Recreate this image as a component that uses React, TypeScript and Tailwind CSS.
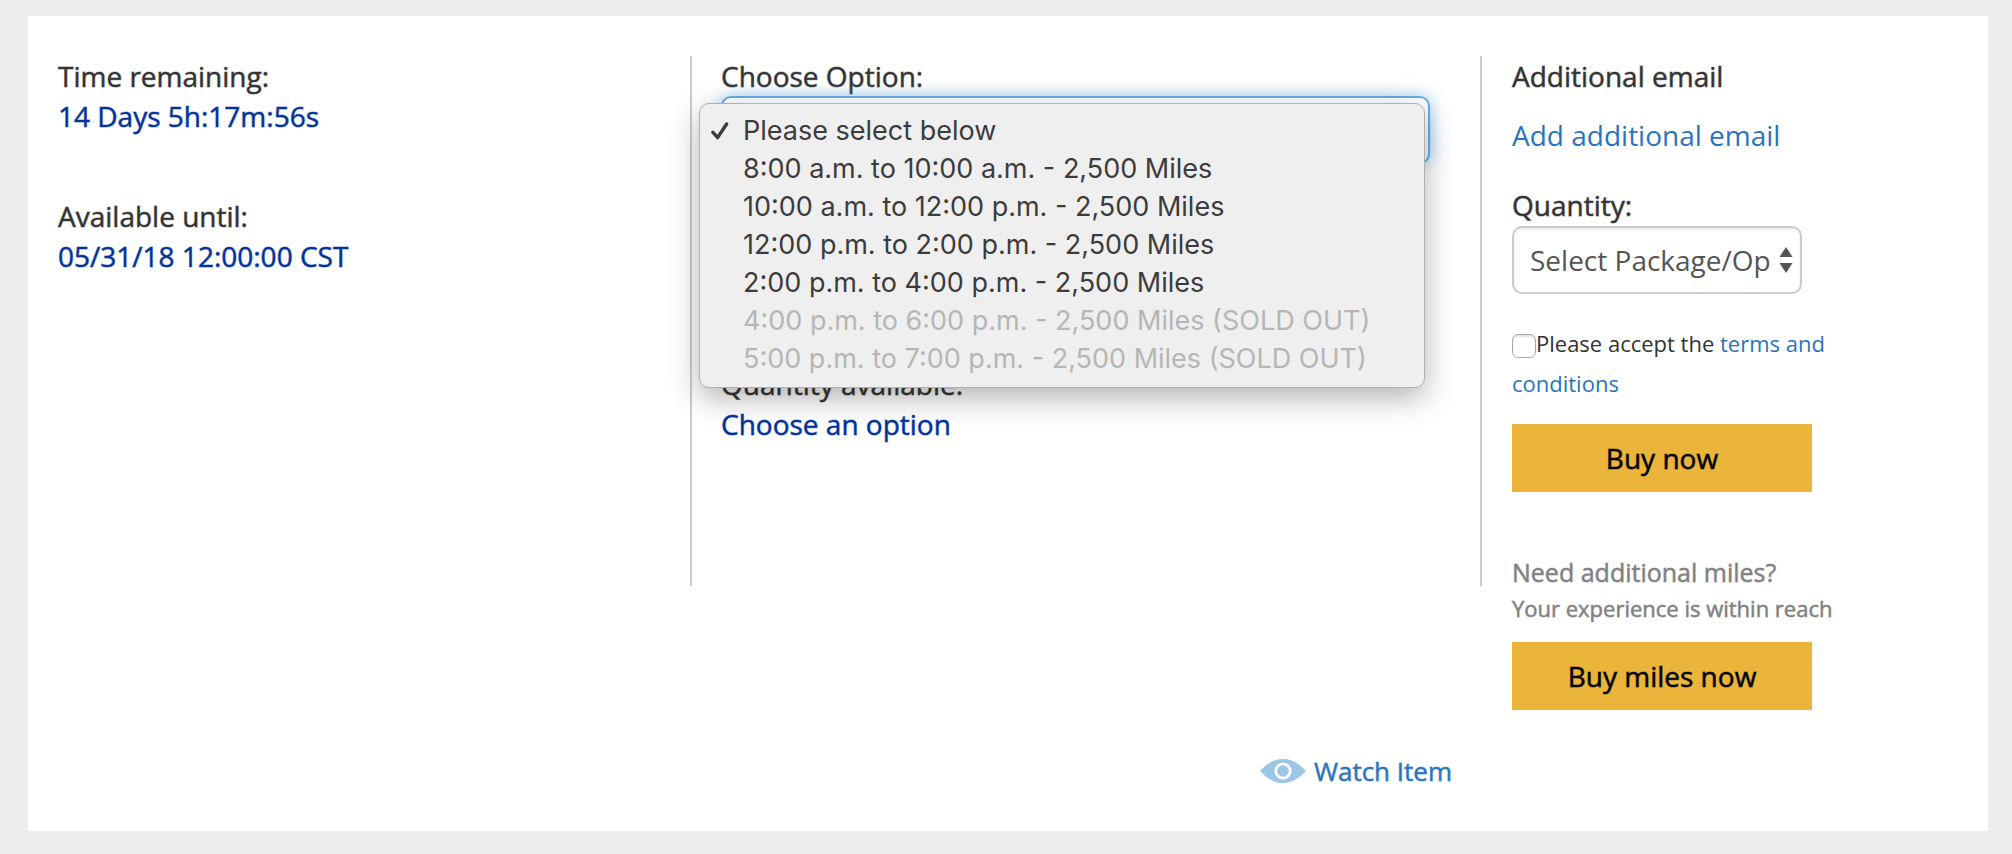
import { ReactNode } from 'react';
import { clsx } from 'clsx';

const options = [
  { label: 'Please select below' },
  { label: '8:00 a.m. to 10:00 a.m. - 2,500 Miles' },
  { label: '10:00 a.m. to 12:00 p.m. - 2,500 Miles' },
  { label: '12:00 p.m. to 2:00 p.m. - 2,500 Miles' },
  { label: '2:00 p.m. to 4:00 p.m. - 2,500 Miles' },
  { label: '4:00 p.m. to 6:00 p.m. - 2,500 Miles (SOLD OUT)', soldOut: true },
  { label: '5:00 p.m. to 7:00 p.m. - 2,500 Miles (SOLD OUT)', soldOut: true },
];

// thickens the regular weight without changing its widths
const strong = '[-webkit-text-stroke:1px_color-mix(in_srgb,currentColor_50%,transparent)]';

const Info = ({ title, value, className }: { title: string; value: string; className?: string }) => (
  <dl className={className}>
    <dt className={strong}>{title}</dt>
    <dd className={clsx('text-[#003399]', strong)}>{value}</dd>
  </dl>
);

const YellowButton = ({ children, className }: { children: ReactNode; className?: string }) => (
  <button
    type="button"
    className={clsx('block h-[68px] w-[300px] max-w-full bg-[#ebb53c] text-black', strong, className)}
  >
    {children}
  </button>
);

const CheckMark = () => (
  <svg className="h-5 w-5" viewBox="0 0 20 20" fill="none" stroke="currentColor" strokeWidth="3.4" strokeLinecap="round" strokeLinejoin="round">
    <path d="M2.8 11.2L7.600 16.6L16.6 3" />
  </svg>
);

const EyeIcon = () => (
  <svg className="h-6 w-[46px]" viewBox="0 0 46 24">
    <path d="M0 12C7 4.500 14 0 23 0S39 4.500 46 12C39 19.500 32 24 23 24S7 19.500 0 12Z" fill="#9cc6e6" />
    <circle cx="23" cy="12" r="7.200" fill="none" stroke="#fff" strokeWidth="2.800" />
  </svg>
);

const OptionMenu = () => (
  <ul
    role="listbox"
    aria-label="Choose Option"
    className="absolute top-[7px] -left-[22px] z-10 w-[726px] rounded-[10px] border border-[#b0b0b0] bg-[#efefef] pt-2 pb-[9px] font-['Inter',sans-serif] text-[27px] leading-[38px] text-[#3c3c3c] shadow-[0_10px_30px_rgba(0,0,0,0.3)]"
  >
    {options.map((option, i) => (
      <li
        key={option.label}
        role="option"
        aria-selected={i === 0}
        aria-disabled={option.soldOut}
        className={clsx(
          'flex items-center whitespace-nowrap',
          option.soldOut ? 'text-[#b6b6b6]' : 'text-[#3c3c3c]'
        )}
      >
        <span className="flex w-[43px] shrink-0 pl-[10px]">{i === 0 && <CheckMark />}</span>
        {option.label}
      </li>
    ))}
  </ul>
);

export default function App() {
  return (
    <div className="min-h-screen bg-[#eeeeee] pt-4 pr-6 pb-6 pl-7 font-['Open_Sans',sans-serif] text-[28px] leading-10 text-[#333333]">
      <main className="grid grid-cols-[664fr_790fr_506fr] bg-white pt-10 pb-10">
        <section className="min-h-[530px] border-r-2 border-[#cccccc] pl-[30px]">
          <Info title="Time remaining:" value="14 Days 5h:17m:56s" />
          <Info title="Available until:" value="05/31/18 12:00:00 CST" className="mt-[60px]" />
        </section>

        <section className="border-r-2 border-[#cccccc] pr-[50px] pl-[29px]">
          <label htmlFor="package" className={clsx('block', strong)}>
            Choose Option:
          </label>
          <div className="relative">
            <select
              id="package"
              className="block h-[68px] w-full appearance-none rounded-[10px] border-2 border-[#66afe9] bg-white px-4 text-[#555555] shadow-[0_0_16px_rgba(102,175,233,0.6)] outline-none"
            >
              {options.map((option) => (
                <option key={option.label} disabled={option.soldOut}>
                  {option.label}
                </option>
              ))}
            </select>
            <OptionMenu />
          </div>
          <Info title="Quantity available:" value="Choose an option" className="mt-[200px]" />
        </section>

        <aside className="row-span-2 pl-[30px]">
          <h2 className={strong}>Additional email</h2>
          <a href="#email" className="mt-[19px] block text-[#2a74bb]">
            Add additional email
          </a>

          <label htmlFor="quantity" className={clsx('mt-[30px] block', strong)}>
            Quantity:
          </label>
          <div className="relative mt-px w-[290px] max-w-full">
            <select
              id="quantity"
              className="block h-[68px] w-full appearance-none rounded-[10px] border-2 border-[#cccccc] bg-white pr-[30px] pl-4 text-[#555555] shadow-[inset_0_2px_3px_rgba(0,0,0,0.08)]"
            >
              <option>Select Package/Option</option>
            </select>
            <svg className="pointer-events-none absolute top-[21px] right-[9px] h-[26px] w-[14px] fill-[#555555]" viewBox="0 0 14 26">
              <path d="M7 0L13.500 10H0.500ZM7 26L0.500 16H13.500Z" />
            </svg>
          </div>

          <div className="mt-[29px] w-[320px] text-[22px]">
            <input
              id="terms"
              type="checkbox"
              className="h-6 w-6 appearance-none rounded-md border border-[#aaaaaa] bg-white align-middle shadow-[inset_0_2px_2px_rgba(0,0,0,0.12)]"
            />
            <label htmlFor="terms">Please accept the </label>
            <a href="#terms" className="text-[#2a74bb]">
              terms and conditions
            </a>
          </div>

          <YellowButton className="mt-[21px]">Buy now</YellowButton>

          <h3 className={clsx('mt-[60px] text-[25px] text-[#808080]', strong)}>Need additional miles?</h3>
          <p className={clsx('text-[22px] leading-8 text-[#808080]', strong)}>Your experience is within reach</p>
          <YellowButton className="mt-[18px]">Buy miles now</YellowButton>
        </aside>

        <div className="col-span-2 flex justify-end pt-[165px] pr-[30px]">
          <a href="#watch" className={clsx('flex items-center gap-2 text-[26px] text-[#2a74bb]', strong)}>
            <EyeIcon />
            Watch Item
          </a>
        </div>
      </main>
    </div>
  );
}
